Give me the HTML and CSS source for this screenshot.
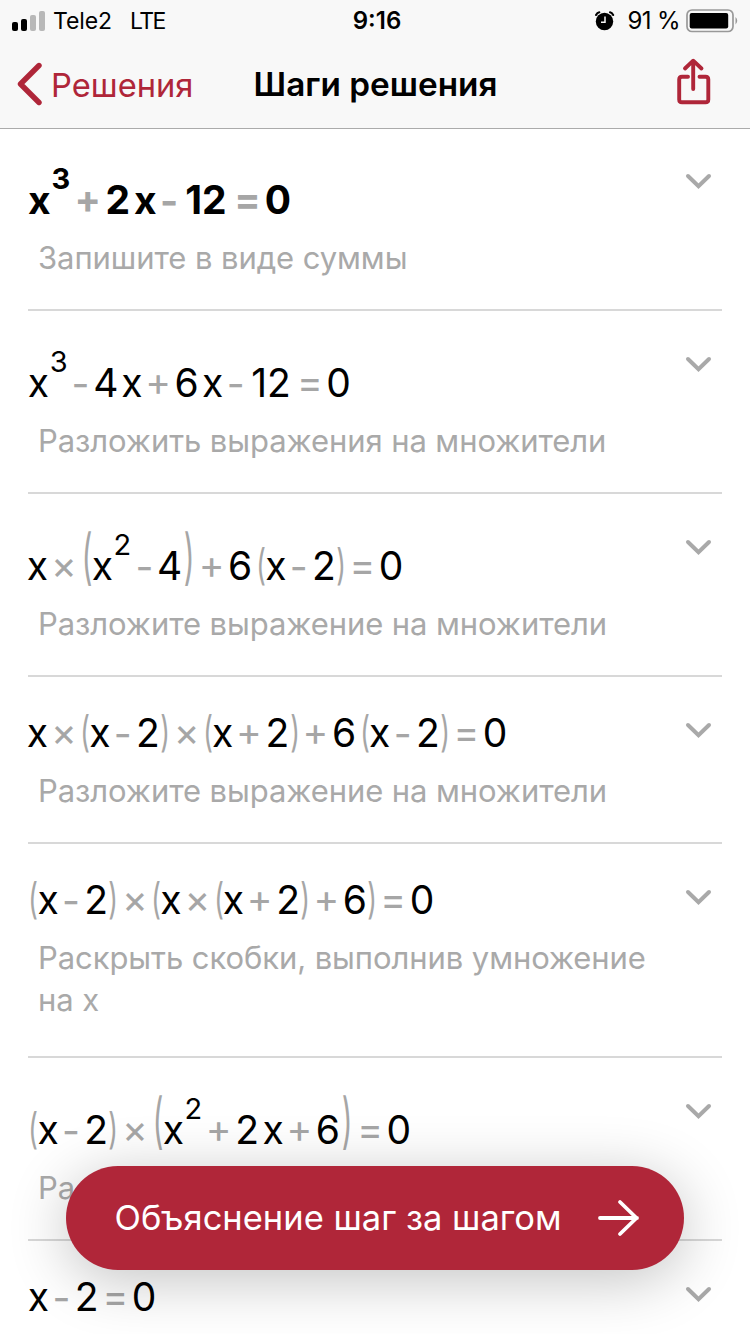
FILE: index.html
```html
<!DOCTYPE html>
<html lang="ru">
<head>
<meta charset="utf-8">
<title>Шаги решения</title>
<link rel="stylesheet" href="styles.css">
</head>
<body>
<div class="screen">
  <header class="header">
    <div class="status">
      <div class="status-left">
        <svg class="signal" width="34" height="20" viewBox="0 0 34 20"><rect x="0" y="11" width="6" height="9" rx="2"/><rect x="9" y="8" width="6" height="12" rx="2"/><rect x="18" y="4" width="6" height="16" rx="2" fill="#b8b8b8"/><rect x="27" y="0" width="6" height="20" rx="2" fill="#b8b8b8"/></svg>
        <span class="carrier">Tele2</span><span class="network">LTE</span>
      </div>
      <span class="time">9:16</span>
      <div class="status-right">
        <svg width="20" height="20" viewBox="0 0 20 20"><circle cx="9.5" cy="10.5" r="8.7"/><path d="M1 4 Q2.2 1.7 4.3 1.3 M15 1.3 Q17 1.7 18.2 4" fill="none" stroke="#000" stroke-width="2" stroke-linecap="round"/><path d="M10 5.5 V11.3 H6" fill="none" stroke="#f8f8f8" stroke-width="1.5"/></svg>
        <span class="percent">91 %</span>
        <svg class="battery" width="54" height="24" viewBox="0 0 54 24"><rect x="1" y="1" width="46" height="21.5" rx="5" fill="none" stroke="#999" stroke-width="1.7"/><rect x="3.7" y="4" width="38.5" height="15.5" rx="2"/><path d="M49.5 8 Q53 11.7 49.5 15.5Z" fill="#999"/></svg>
      </div>
    </div>
    <nav class="nav">
      <div class="back">
        <svg width="26" height="44" viewBox="0 0 26 44"><path d="M22 3.5 L3.5 22 L22 40.5" fill="none" stroke="#af2639" stroke-width="5.4" stroke-linecap="round" stroke-linejoin="round"/></svg>
        <span class="back-label">Решения</span>
      </div>
      <h1 class="title">Шаги решения</h1>
      <svg class="share" width="34" height="48" viewBox="0 0 34 48"><path d="M11 18.7 H5 Q2.2 18.7 2.2 21.5 V41.5 Q2.2 44.3 5 44.3 H28.5 Q31.3 44.3 31.3 41.5 V21.5 Q31.3 18.7 28.5 18.7 H22.5 M16.2 31 V3 M8 10.5 L16.2 2.7 L24.5 10.5" fill="none" stroke="#af2639" stroke-width="3.9" stroke-linecap="round" stroke-linejoin="round"/></svg>
    </nav>
  </header>

  <main class="steps">
    <section class="step tall">
      <div class="body">
        <div class="eq bold"><span class="x">x</span><sup class="sup">3</sup><span class="op plus">+</span><span class="d">2</span><span class="x mul">x</span><span class="op minus">-</span><span class="dd">12</span><span class="op equals">=</span><span class="d">0</span></div>
        <p class="hint">Запишите в виде суммы</p>
      </div>
      <svg class="chev" width="28" height="18" viewBox="0 0 28 18"><path d="M3 4 L13.5 14.3 L24 4"/></svg>
    </section>
    <section class="step tall">
      <div class="body">
        <div class="eq"><span class="x">x</span><sup class="sup">3</sup><span class="op minus">-</span><span class="d">4</span><span class="x mul">x</span><span class="op plus">+</span><span class="d">6</span><span class="x mul">x</span><span class="op minus">-</span><span class="dd">12</span><span class="op equals">=</span><span class="d">0</span></div>
        <p class="hint">Разложить выражения на множители</p>
      </div>
      <svg class="chev" width="28" height="18" viewBox="0 0 28 18"><path d="M3 4 L13.5 14.3 L24 4"/></svg>
    </section>
    <section class="step tall">
      <div class="body">
        <div class="eq outdent"><span class="x">x</span><span class="op times">×</span><span class="open big"><i>(</i></span><span class="x">x</span><sup class="sup">2</sup><span class="op minus">-</span><span class="d">4</span><span class="close big"><i>)</i></span><span class="op plus">+</span><span class="d">6</span><span class="open mul"><i>(</i></span><span class="x">x</span><span class="op minus">-</span><span class="d">2</span><span class="close"><i>)</i></span><span class="op equals">=</span><span class="d">0</span></div>
        <p class="hint">Разложите выражение на множители</p>
      </div>
      <svg class="chev" width="28" height="18" viewBox="0 0 28 18"><path d="M3 4 L13.5 14.3 L24 4"/></svg>
    </section>
    <section class="step">
      <div class="body">
        <div class="eq outdent"><span class="x">x</span><span class="op times">×</span><span class="open"><i>(</i></span><span class="x">x</span><span class="op minus">-</span><span class="d">2</span><span class="close"><i>)</i></span><span class="op times">×</span><span class="open"><i>(</i></span><span class="x">x</span><span class="op plus">+</span><span class="d">2</span><span class="close"><i>)</i></span><span class="op plus">+</span><span class="d">6</span><span class="open mul"><i>(</i></span><span class="x">x</span><span class="op minus">-</span><span class="d">2</span><span class="close"><i>)</i></span><span class="op equals">=</span><span class="d">0</span></div>
        <p class="hint">Разложите выражение на множители</p>
      </div>
      <svg class="chev" width="28" height="18" viewBox="0 0 28 18"><path d="M3 4 L13.5 14.3 L24 4"/></svg>
    </section>
    <section class="step two-line">
      <div class="body">
        <div class="eq"><span class="open"><i>(</i></span><span class="x">x</span><span class="op minus">-</span><span class="d">2</span><span class="close"><i>)</i></span><span class="op times">×</span><span class="open"><i>(</i></span><span class="x">x</span><span class="op times">×</span><span class="open"><i>(</i></span><span class="x">x</span><span class="op plus">+</span><span class="d">2</span><span class="close"><i>)</i></span><span class="op plus">+</span><span class="d">6</span><span class="close"><i>)</i></span><span class="op equals">=</span><span class="d">0</span></div>
        <p class="hint">Раскрыть скобки, выполнив умножение<br>на x</p>
      </div>
      <svg class="chev" width="28" height="18" viewBox="0 0 28 18"><path d="M3 4 L13.5 14.3 L24 4"/></svg>
    </section>
    <section class="step tall">
      <div class="body">
        <div class="eq"><span class="open"><i>(</i></span><span class="x">x</span><span class="op minus">-</span><span class="d">2</span><span class="close"><i>)</i></span><span class="op times">×</span><span class="open big"><i>(</i></span><span class="x">x</span><sup class="sup">2</sup><span class="op plus">+</span><span class="d">2</span><span class="x mul">x</span><span class="op plus">+</span><span class="d">6</span><span class="close big"><i>)</i></span><span class="op equals">=</span><span class="d">0</span></div>
        <p class="hint">Ра</p>
      </div>
      <svg class="chev" width="28" height="18" viewBox="0 0 28 18"><path d="M3 4 L13.5 14.3 L24 4"/></svg>
    </section>
    <section class="step">
      <div class="body">
        <div class="eq"><span class="x">x</span><span class="op minus">-</span><span class="d">2</span><span class="op equals">=</span><span class="d">0</span></div>
      </div>
      <svg class="chev" width="28" height="18" viewBox="0 0 28 18"><path d="M3 4 L13.5 14.3 L24 4"/></svg>
    </section>
  </main>

  <div class="cta">
    <span class="cta-label">Объяснение шаг за шагом</span>
    <svg width="44" height="40" viewBox="0 0 44 40"><path d="M3 20 H40 M23 4 L39.5 20 L23 36" fill="none" stroke="#fff" stroke-width="3.8" stroke-linecap="round" stroke-linejoin="round"/></svg>
  </div>
</div>
</body>
</html>
```
FILE: styles.css
```css
* { box-sizing: border-box; }
body { margin: 0; background: #fff; font-family: Inter, "Noto Sans", sans-serif; color: #000; }
.screen { position: relative; width: 750px; height: 1334px; overflow: hidden; background: #fff; }

.header { height: 129px; background: #f8f8f8; border-bottom: 1px solid #ababab; }
.status { display: grid; grid-template-columns: 1fr auto 1fr; align-items: center; height: 40px; padding: 1px 12px 0; font-size: 23px; line-height: 40px; }
.status-left { display: flex; align-items: center; }
.signal { margin-top: -1px; }
.carrier { margin-left: 7px; letter-spacing: -0.1px; }
.network { margin-left: 18px; letter-spacing: -1.5px; }
.time { font-weight: 600; font-size: 24px; letter-spacing: 0; margin-left: 4px; }
.status-right { display: flex; align-items: center; justify-content: flex-end; }
.percent { margin: 0 6px 0 12px; font-size: 24px; letter-spacing: -0.6px; white-space: nowrap; }
.battery { margin-right: -2px; }

.nav { display: grid; grid-template-columns: 1fr auto 1fr; align-items: center; height: 88px; padding: 2px 38px 0 17px; }
.back { display: flex; align-items: center; color: #af2639; }
.back svg { margin-top: -2px; }
.back-label { margin-left: 8px; font-size: 32.7px; line-height: 44px; }
.title { margin: -2px 0 0 22px; font-size: 33.3px; line-height: 44px; font-weight: 600; }
.share { justify-self: end; margin: -7px 1px 0 0; }

.steps { margin-top: -1px; padding: 0 28px; }
.step { display: flex; justify-content: space-between; align-items: flex-start; height: 167px; border-bottom: 2px solid #d8d8d8; }
.step.tall { height: 183px; }
.step.two-line { height: 214px; }
.body { padding-top: 36px; }
.tall .body { padding-top: 52px; }
.chev { flex: none; margin: 44px 9px 0 0; fill: none; stroke: #a9a9a9; stroke-width: 4; stroke-linecap: round; }

.eq { display: flex; align-items: baseline; height: 40px; font-size: 39px; line-height: 40px; white-space: nowrap; }
.eq.outdent { margin-left: -1.2px; }
.eq > * { display: flex; justify-content: center; flex: none; }
.x { width: 21px; }
.d { width: 25.6px; }
.dd { width: 46px; }
.mul { margin-left: 2.9px; }
.sup { width: 19.2px; align-self: flex-start; margin: -16px 0 0; font-size: 29px; line-height: 30px; }
.op, .open, .close { color: #a6a6a6; }
.plus { width: 31.3px; transform: translateY(-0.6px); }
.times { width: 32px; transform: translateY(-0.6px); }
.minus { width: 24.8px; transform: translateY(0.6px); }
.equals { width: 31.8px; transform: translateY(-0.6px); }
.open { width: 9.6px; padding-left: 1.4px; }
.close { width: 9.8px; padding-right: 0.6px; }
.open i, .close i { font-style: normal; transform: scale(0.68, 1.09); transform-origin: 50% 85%; }
.open.big { width: 12px; padding-left: 2px; }
.close.big { width: 13.5px; padding-right: 0; }
.open.big i, .close.big i { transform: translateY(1px) scale(0.75, 1.55); transform-origin: 50% 97%; }

.bold { font-weight: 700; }
.bold .x { width: 22.6px; }
.bold .d { width: 27px; }
.bold .dd { width: 49px; }
.bold .plus { width: 33px; }
.bold .equals { width: 34px; }
.bold .sup { width: 20.6px; }

.hint { margin: 17px 0 0 10px; font-size: 31px; line-height: 42px; letter-spacing: -0.08px; color: #a9a9a9; white-space: nowrap; }

.cta { position: absolute; left: 66px; top: 1166px; display: flex; align-items: center; justify-content: space-between; width: 618px; height: 104px; padding: 0 43px 0 48.5px; border-radius: 52px; background: #b02639; color: #fff; box-shadow: 0 10px 60px rgba(0, 0, 0, 0.24); }
.cta-label { font-size: 34.5px; line-height: 44px; white-space: nowrap; }
```
